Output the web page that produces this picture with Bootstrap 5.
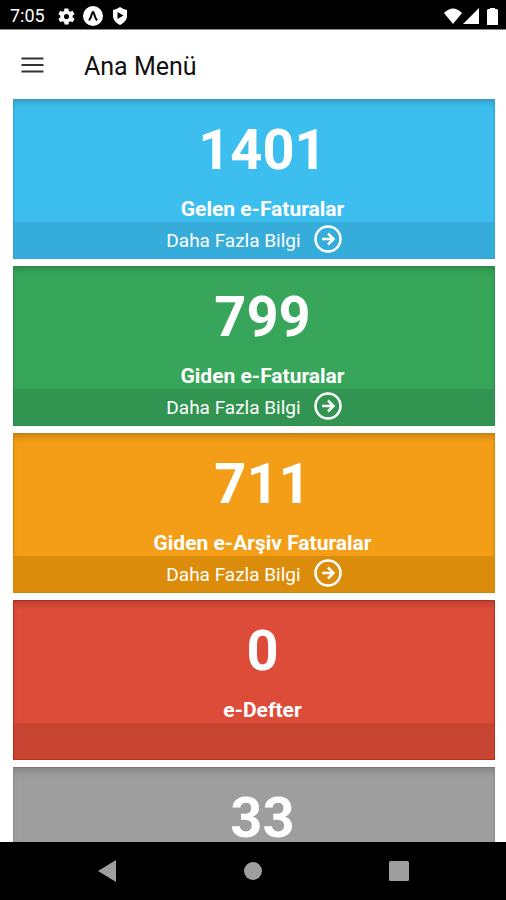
<!DOCTYPE html>
<html lang="tr">
<head>
<meta charset="utf-8">
<meta name="viewport" content="width=device-width, initial-scale=1">
<title>Ana Menü</title>
<link href="https://cdn.jsdelivr.net/npm/bootstrap@5.3.0/dist/css/bootstrap.min.css" rel="stylesheet">
<style>
body { font-family: Roboto, "Liberation Sans", sans-serif; color: #111; }
svg { display: block; flex: none; }
.status-bar { height: 30px; padding: 3px 8px 0 10px; font-size: 18px; line-height: 26px; border-bottom: 1px solid #888; }
.status-clock { margin-right: 13px; }
.app-bar { height: 69px; padding: 0 20px; gap: 39px; }
.app-title { font-size: 25px; line-height: 28px; font-weight: 400; padding-top: 4px; }
.tiles { gap: 7px; padding: 0 11px 0 13px; }
.tile { height: 160px; flex: none; background: var(--tile); border: 1px solid var(--edge); border-top-color: var(--top); box-shadow: inset 0 6px 8px -5px rgba(0,0,0,.25); color: #fff; }
.tile-body { padding: 27px 0 0 17px; }
.tile-number { font-size: 56px; line-height: 46px; font-weight: 700; }
.tile-name { font-size: 21px; line-height: 24px; font-weight: 700; margin-top: 24px; }
.tile-foot { height: 36px; background: var(--foot); font-size: 19px; gap: 13px; color: #fff; padding-top: 2px; }
.tile-blue { --tile: #3cbfef; --foot: #35acd9; --edge: #35a5cf; --top: #4199bb; }
.tile-green { --tile: #37a65a; --foot: #319551; --edge: #2c8f4b; --top: #37814c; }
.tile-orange { --tile: #f39e16; --foot: #da8c0a; --edge: #d28605; --top: #b87d21; }
.tile-red { --tile: #dd4b39; --foot: #c74432; --edge: #bd2d18; --top: #a83325; }
.tile-gray { --tile: #9e9e9e; --foot: #8e8e8e; --edge: #8d8d8d; --top: #777; }
.system-nav { height: 58px; gap: 116px; }
.system-nav .btn { width: 30px; height: 40px; }
</style>
<script src="https://cdn.jsdelivr.net/npm/bootstrap@5.3.0/dist/js/bootstrap.bundle.min.js"></script>
</head>
<body class="bg-white">
<div class="d-flex flex-column vh-100 overflow-hidden">
  <div class="status-bar d-flex align-items-center flex-shrink-0 bg-black text-white">
    <span class="status-clock">7:05</span>
    <svg width="17" height="17" viewBox="2 2 20 20" fill="#fff"><path d="M19.1 12.9c0-.3.1-.6.1-.9s0-.6-.1-.9l2-1.6c.2-.1.2-.4.1-.6l-1.9-3.3c-.1-.2-.4-.3-.6-.2l-2.4 1c-.5-.4-1-.7-1.600-.9l-.4-2.600c0-.2-.2-.4-.5-.4h-3.800c-.2 0-.4.2-.5.4l-.4 2.600c-.6.2-1.100.5-1.600.9l-2.400-1c-.2-.1-.5 0-.6.2L2.700 8.900c-.1.2-.1.5.1.6l2 1.600c0 .3-.1.6-.1.900s0 .6.1.900l-2 1.600c-.2.1-.2.4-.1.600l1.900 3.300c.1.2.4.3.600.2l2.400-1c.5.4 1 .7 1.600.9l.4 2.600c0 .2.2.4.5.4h3.800c.2 0 .5-.2.5-.4l.4-2.600c.6-.2 1.100-.5 1.600-.9l2.400 1c.2.1.5 0 .6-.2l1.900-3.300c.1-.2.1-.5-.1-.6zM12 15a3 3 0 1 1 0-6 3 3 0 0 1 0 6z"/></svg>
    <svg class="ms-2" width="20" height="20" viewBox="0 0 20 20"><circle cx="10" cy="10" r="10" fill="#fff"/><path d="M6 14.500Q8 12 9 7.500 10 4.500 11 7.500 12 12 14 14.500" fill="none" stroke="#000" stroke-width="2"/></svg>
    <svg class="ms-2" width="18" height="18" viewBox="0 0 18 18"><path d="M9 0Q12.500 2.500 16 3v6c0 4-3 7-7 9-4-2-7-5-7-9V3Q5.500 2.500 9 0z" fill="#fff"/><path d="M6.500 5v7L12.500 8.500z" fill="#000"/></svg>
    <svg class="ms-auto" width="20" height="16" viewBox="0 0 20 16"><path d="M1 5Q10-4 19 5L10 16z" fill="#fff"/></svg>
    <svg width="16" height="16" viewBox="0 0 16 16"><path d="M0 16 16 0v16z" fill="#fff"/></svg>
    <svg class="ms-2" width="11" height="17" viewBox="0 0 11 17"><path d="M3 0h5v1h2l1 1v15H0V2l1-1h2z" fill="#fff"/></svg>
  </div>
  <header class="app-bar d-flex align-items-center flex-shrink-0">
    <button type="button" class="btn p-0 border-0" aria-label="Menü"><svg width="25" height="18" viewBox="0 0 25 18"><path d="M1.500 2.500h22M1.500 9h22M1.500 15.500h22" stroke="#333" stroke-width="2.200"/></svg></button>
    <h1 class="app-title mb-0">Ana Menü</h1>
  </header>
  <main class="tiles d-flex flex-column flex-grow-1 overflow-hidden">
    <section class="tile tile-blue d-flex flex-column justify-content-between text-center">
      <div class="tile-body"><div class="tile-number">1401</div><h2 class="tile-name mb-0">Gelen e-Faturalar</h2></div>
      <a href="#" class="tile-foot d-flex align-items-center justify-content-center text-decoration-none">Daha Fazla Bilgi
        <svg width="28" height="32" viewBox="0 0 28 32" fill="none" stroke="#fff" stroke-width="2.500"><circle cx="14" cy="14" r="12.500"/><path d="M8 14h11M14 8.500l5.500 5.500-5.500 5.500"/></svg></a>
    </section>
    <section class="tile tile-green d-flex flex-column justify-content-between text-center">
      <div class="tile-body"><div class="tile-number">799</div><h2 class="tile-name mb-0">Giden e-Faturalar</h2></div>
      <a href="#" class="tile-foot d-flex align-items-center justify-content-center text-decoration-none">Daha Fazla Bilgi
        <svg width="28" height="32" viewBox="0 0 28 32" fill="none" stroke="#fff" stroke-width="2.500"><circle cx="14" cy="14" r="12.500"/><path d="M8 14h11M14 8.500l5.500 5.500-5.500 5.500"/></svg></a>
    </section>
    <section class="tile tile-orange d-flex flex-column justify-content-between text-center">
      <div class="tile-body"><div class="tile-number">711</div><h2 class="tile-name mb-0">Giden e-Arşiv Faturalar</h2></div>
      <a href="#" class="tile-foot d-flex align-items-center justify-content-center text-decoration-none">Daha Fazla Bilgi
        <svg width="28" height="32" viewBox="0 0 28 32" fill="none" stroke="#fff" stroke-width="2.500"><circle cx="14" cy="14" r="12.500"/><path d="M8 14h11M14 8.500l5.500 5.500-5.500 5.500"/></svg></a>
    </section>
    <section class="tile tile-red d-flex flex-column justify-content-between text-center">
      <div class="tile-body"><div class="tile-number">0</div><h2 class="tile-name mb-0">e-Defter</h2></div>
      <div class="tile-foot"></div>
    </section>
    <section class="tile tile-gray text-center">
      <div class="tile-body"><div class="tile-number">33</div></div>
    </section>
  </main>
  <nav class="system-nav d-flex align-items-center justify-content-center flex-shrink-0 bg-black" aria-label="Sistem">
    <button type="button" class="btn p-0 border-0 d-flex align-items-center justify-content-center" aria-label="Geri"><svg width="18" height="22" viewBox="0 0 18 22"><path d="M0 11 18 0v22z" fill="#9e9e9e"/></svg></button>
    <button type="button" class="btn p-0 border-0 d-flex align-items-center justify-content-center" aria-label="Ana ekran"><svg width="18" height="18" viewBox="0 0 18 18"><circle cx="9" cy="9" r="9" fill="#9e9e9e"/></svg></button>
    <button type="button" class="btn p-0 border-0 d-flex align-items-center justify-content-center" aria-label="Son uygulamalar"><svg width="20" height="20" viewBox="0 0 20 20"><rect width="20" height="20" rx="1.500" fill="#9e9e9e"/></svg></button>
  </nav>
</div>
</body>
</html>
